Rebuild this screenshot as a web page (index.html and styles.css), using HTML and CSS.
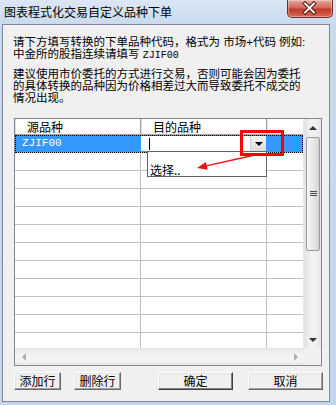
FILE: index.html
```html
<!DOCTYPE html>
<html>
<head>
<meta charset="utf-8">
<link rel="stylesheet" href="styles.css">
</head>
<body>
<div class="window">
  <div class="titlebar">
    <div class="title">图表程式化交易自定义品种下单</div>
    <div class="close">
      <svg width="46" height="18" viewBox="0 0 46 18">
        <path d="M18.5 4.5 L27.5 13.5 M27.5 4.5 L18.5 13.5" stroke="#5a1a16" stroke-width="4" stroke-linecap="square"/>
        <path d="M18.5 4.5 L27.5 13.5 M27.5 4.5 L18.5 13.5" stroke="#ffffff" stroke-width="2" stroke-linecap="square"/>
      </svg>
    </div>
  </div>
  <div class="client">
    <p class="para p1">请下方填写转换的下单品种代码，格式为 市场+代码 例如:<br>中金所的股指连续请填写 <span class="mono">ZJIF00</span></p>
    <p class="para p2">建议使用市价委托的方式进行交易，否则可能会因为委托<br>的具体转换的品种因为价格相差过大而导致委托不成交的<br>情况出现。</p>
    <div class="grid">
      <div class="data">
        <div class="row head">
          <div class="c c1">源品种</div>
          <div class="c c2">目的品种</div>
          <div class="c c3"></div>
        </div>
        <div class="row sel">
          <div class="c c1"><span class="code">ZJIF00</span></div>
          <div class="c c2">
            <div class="editor">
              <span class="caret"></span>
              <span class="ddbtn"><span class="tri-down"></span></span>
            </div>
          </div>
          <div class="c c3"></div>
        </div>
        <div class="row"><div class="c c1"></div><div class="c c2"></div><div class="c c3"></div></div>
        <div class="row"><div class="c c1"></div><div class="c c2"></div><div class="c c3"></div></div>
        <div class="row"><div class="c c1"></div><div class="c c2"></div><div class="c c3"></div></div>
        <div class="row"><div class="c c1"></div><div class="c c2"></div><div class="c c3"></div></div>
        <div class="row"><div class="c c1"></div><div class="c c2"></div><div class="c c3"></div></div>
        <div class="row"><div class="c c1"></div><div class="c c2"></div><div class="c c3"></div></div>
        <div class="row"><div class="c c1"></div><div class="c c2"></div><div class="c c3"></div></div>
        <div class="row"><div class="c c1"></div><div class="c c2"></div><div class="c c3"></div></div>
        <div class="row"><div class="c c1"></div><div class="c c2"></div><div class="c c3"></div></div>
        <div class="row"><div class="c c1"></div><div class="c c2"></div><div class="c c3"></div></div>
        <div class="row"><div class="c c1"></div><div class="c c2"></div><div class="c c3"></div></div>
      </div>
      <div class="vscroll">
        <div class="sbtn"><span class="tri-up"></span></div>
        <div class="thumb"><span class="grip"></span></div>
        <div class="track"></div>
        <div class="sbtn"><span class="tri-down small"></span></div>
      </div>
      <div class="hscroll">
        <div class="hbtn"><span class="tri-left"></span></div>
        <div class="htrack"></div>
        <div class="hbtn"><span class="tri-right"></span></div>
      </div>
      <div class="corner"></div>

      <div class="droplist">
        <div class="item"></div>
        <div class="item">选择..</div>
      </div>
      <div class="redbox"></div>
      <svg class="arrow" width="70" height="26" viewBox="0 0 70 26">
        <line x1="60" y1="6" x2="10" y2="17.2" stroke="#ee1111" stroke-width="1.3"/>
        <polygon points="2,19 12.6,20.7 10.9,12.9" fill="#ee1111"/>
      </svg>
    </div>
    <div class="buttons">
      <div class="btn w47">添加行</div>
      <div class="btn w47 g13">删除行</div>
      <div class="btn w75 g37 default">确定</div>
      <div class="btn w75 g15">取消</div>
    </div>
  </div>
</div>
</body>
</html>
```

FILE: styles.css
```css
* { box-sizing: border-box; }
html, body { margin: 0; padding: 0; }
body {
  width: 336px;
  height: 405px;
  overflow: hidden;
  font-family: "Noto Sans CJK SC", "Noto Sans CJK JP", sans-serif;
  font-size: 12px;
  color: #000;
}
.window {
  width: 336px;
  height: 405px;
  display: flex;
  flex-direction: column;
  padding: 0 6px 3px 2px;
  background: linear-gradient(180deg, #dbe7f5 0px, #c9dbef 24px, #c3d6ec 100%);
}
.titlebar {
  height: 24px;
  display: flex;
  align-items: flex-start;
  flex: none;
}
.title {
  padding: 5px 0 0 2px;
  line-height: 14px;
  font-size: 12px;
  color: #000;
}
.close {
  margin-left: auto;
  margin-right: -3px;
  width: 46px;
  height: 18px;
  border: 1px solid #7a2a24;
  border-top: none;
  border-radius: 0 0 5px 5px;
  background: linear-gradient(180deg, #e6a79f 0%, #d0685c 45%, #c1392b 55%, #d46a55 100%);
  box-shadow: inset 0 0 0 1px rgba(255,255,255,0.35);
  display: flex;
}
.close svg { display: block; margin: -1px 0 0 -1px; }
.client {
  flex: 1;
  border: 1px solid #7b8899;
  background: #f0f0f0;
  display: flex;
  flex-direction: column;
}
.para {
  margin: 0 0 0 10px;
  font-family: "Liberation Sans", "Noto Sans CJK SC", "Noto Sans CJK JP", sans-serif;
  font-size: 11.5px;
  line-height: 12px;
  white-space: nowrap;
}
.p1 { margin-top: 11px; }
.p2 { margin-top: 6px; }
.mono {
  font-family: "Liberation Mono", "DejaVu Sans Mono", monospace;
  font-size: 10px;
}
.grid {
  position: relative;
  margin: 14px 7px 0 11px;
  height: 248px;
  border: 1px solid #828790;
  display: grid;
  grid-template-columns: 289px 17px;
  grid-template-rows: 229px 17px;
  background: #f0f0f0;
}
.data {
  overflow: hidden;
  background: #fff;
  border-right: 1px solid #e8e8e8;
}
.row {
  display: flex;
  height: 18px;
  border-bottom: 1px solid #c0c0c0;
}
.c { height: 100%; }
.c1 { width: 126px; border-right: 1px solid #c0c0c0; flex: none; }
.c2 { width: 126px; border-right: 1px solid #c0c0c0; flex: none; }
.c3 { flex: 1; }
.row.head {
  height: 16px;
  border-bottom: 1px solid #a8a8a8;
  background: linear-gradient(180deg, #ffffff 0%, #ffffff 60%, #f2f2f2 100%);
}
.row.head .c {
  line-height: 15px;
  padding-left: 12px;
  border-right: 1px solid #a0a0a0;
  box-shadow: inset 1px 0 0 #e0e0e0;
}
.row.head .c3 { border-right: none; }
.row.sel {
  position: relative;
  background: #3399ff;
  outline: 1px dotted #000;
  outline-offset: -1px;
}
.row.sel .c1 { border-right-color: #3399ff; }
.row.sel .c2 { border-right-color: #3399ff; padding: 1px 0; }
.code {
  display: block;
  padding-left: 7px;
  line-height: 17px;
  color: #fff;
  font-family: "Liberation Mono", "DejaVu Sans Mono", monospace;
  font-size: 11px;
}
.editor {
  height: 100%;
  background: #fff;
  display: flex;
  align-items: center;
}
.caret {
  width: 1px;
  height: 12px;
  background: #000;
  margin-left: 8px;
}
.ddbtn {
  margin-left: auto;
  width: 16px;
  height: 15px;
  background: linear-gradient(180deg, #f4f4f4, #dcdcdc);
  border-left: 1px solid #d0d0d0;
  display: flex;
  align-items: center;
  justify-content: center;
}
.tri-down {
  width: 0; height: 0;
  border-left: 4px solid transparent;
  border-right: 4px solid transparent;
  border-top: 4px solid #000;
}
.tri-down.small {
  border-top: 4px solid #333;
}
.tri-up {
  width: 0; height: 0;
  border-left: 4px solid transparent;
  border-right: 4px solid transparent;
  border-bottom: 4px solid #333;
}
.tri-left {
  width: 0; height: 0;
  border-top: 4px solid transparent;
  border-bottom: 4px solid transparent;
  border-right: 4px solid #b0b0b0;
}
.tri-right {
  width: 0; height: 0;
  border-top: 4px solid transparent;
  border-bottom: 4px solid transparent;
  border-left: 4px solid #b0b0b0;
}
.vscroll {
  display: flex;
  flex-direction: column;
  background: linear-gradient(90deg, #e2e2e2, #f1f1f1 40%, #f1f1f1 70%, #e6e6e6);
}
.sbtn {
  height: 17px;
  flex: none;
  display: flex;
  align-items: center;
  justify-content: center;
}
.thumb {
  margin: 1px 1px 0 2px;
  height: 114px;
  border: 1px solid #9a9a9a;
  border-radius: 2px;
  background: linear-gradient(90deg, #f6f6f6, #e8e8e8 50%, #d4d4d4);
  display: flex;
  align-items: center;
  justify-content: center;
  flex: none;
}
.grip {
  width: 7px;
  height: 6px;
  background: repeating-linear-gradient(180deg, #4a4a4a 0, #4a4a4a 1px, transparent 1px, transparent 2px);
}
.track { flex: 1; }
.hscroll {
  display: flex;
  align-items: stretch;
  background: linear-gradient(180deg, #e6e6e6, #f3f3f3 40%, #f3f3f3 70%, #e8e8e8);
}
.hbtn {
  width: 17px;
  flex: none;
  display: flex;
  align-items: center;
  justify-content: center;
}
.htrack { flex: 1; }
.corner { background: #f0f0f0; }
.droplist {
  position: absolute;
  left: 132px;
  top: 32px;
  width: 120px;
  height: 26px;
  background: #fff;
  border: 1px solid #646464;
}
.item {
  height: 12px;
  line-height: 12px;
  padding-left: 2px;
  font-size: 12px;
}
.redbox {
  position: absolute;
  left: 225px;
  top: 11px;
  width: 44px;
  height: 26px;
  border: 3px solid #ff0000;
}
.arrow {
  position: absolute;
  left: 180px;
  top: 30px;
}
.buttons {
  display: flex;
  margin: 6px 0 0 11px;
  height: 18px;
}
.btn {
  height: 18px;
  background: #f0f0f0;
  border: 1px solid;
  border-color: #ffffff #696969 #696969 #ffffff;
  box-shadow: inset -1px -1px 0 #a0a0a0, inset 1px 1px 0 #e3e3e3;
  display: flex;
  align-items: center;
  justify-content: center;
  font-size: 12px;
  line-height: 14px;
}
.btn.default {
  border-color: #ffffff #404040 #404040 #ffffff;
  box-shadow: inset -1px -1px 0 #808080, inset 1px 1px 0 #e3e3e3;
}
.w47 { width: 47px; }
.w75 { width: 75px; }
.g13 { margin-left: 13px; }
.g37 { margin-left: 37px; }
.g15 { margin-left: 15px; }
```
